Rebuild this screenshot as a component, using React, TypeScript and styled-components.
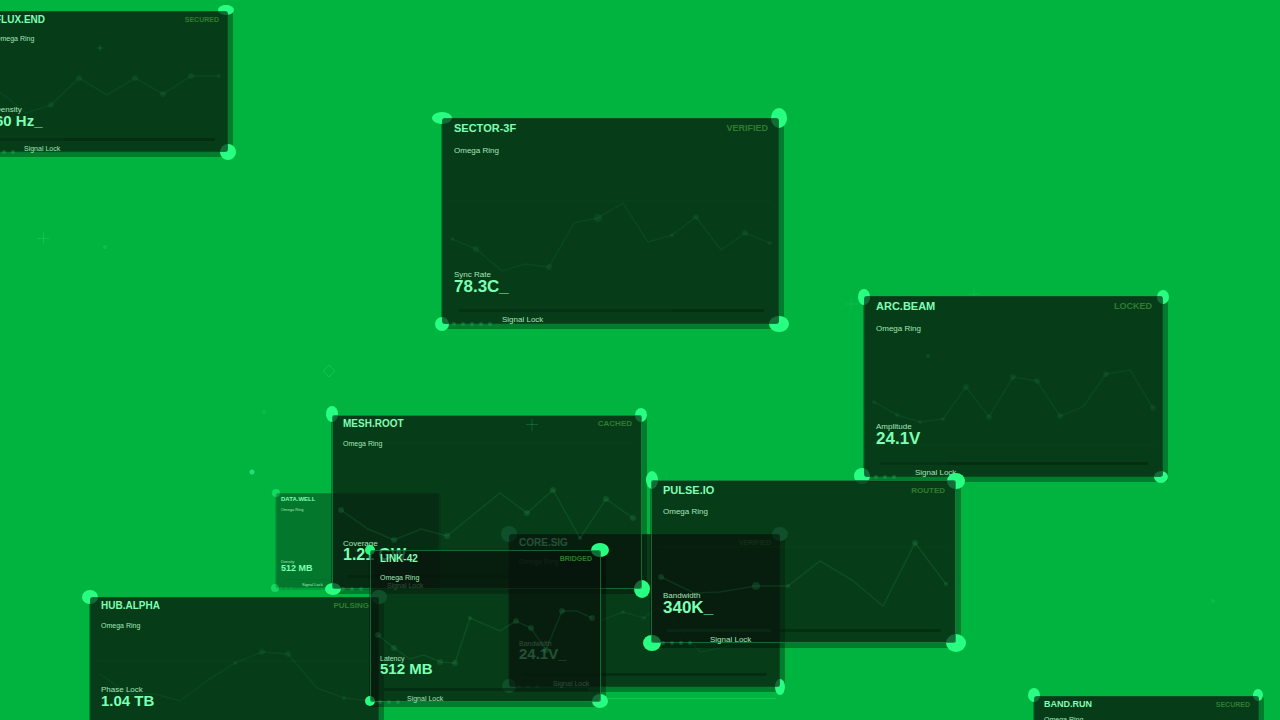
import React from "react";
import styled, { createGlobalStyle, css } from "styled-components";

const GlobalStyle = createGlobalStyle`
  *, *::before, *::after { box-sizing: border-box; }
  body {
    margin: 0;
    background: #00b440;
    font-family: "Liberation Sans", Arial, sans-serif;
  }
  h2, p { margin: 0; }
`;

type Metrics = {
  head: number;
  title: number;
  tag: number;
  subGap: number;
  subLine: number;
  sub: number;
  label: number;
  labelLine: number;
  value: number;
  valueLine: number;
  valueGap: number;
  foot: number;
  footLine: number;
  bar: number;
  barGap: number;
  pad: number;
};

const large: Metrics = {
  head: 20, title: 11, tag: 9, subGap: 7, subLine: 12, sub: 8,
  label: 8, labelLine: 9, value: 17, valueLine: 16, valueGap: 14,
  foot: 8, footLine: 8, bar: 3, barGap: 4, pad: 12,
};
const medium: Metrics = {
  ...large, tag: 8, subGap: 6, valueGap: 13, footLine: 7,
};
const small: Metrics = {
  head: 17, title: 10, tag: 8, subGap: 6, subLine: 12, sub: 7,
  label: 8, labelLine: 8, value: 15, valueLine: 14, valueGap: 14,
  foot: 7, footLine: 7, bar: 3, barGap: 4, pad: 11,
};
const compact: Metrics = {
  ...small, tag: 7, subGap: 5, label: 7, labelLine: 7, valueGap: 12, pad: 10,
};
const tiny: Metrics = {
  head: 12, title: 6, tag: 4, subGap: 1, subLine: 8, sub: 4,
  label: 4, labelLine: 5, value: 9, valueLine: 8, valueGap: 7,
  foot: 4, footLine: 6, bar: 1, barGap: 2, pad: 5,
};

type Corner = [cx: number, cy: number, rx: number, ry: number];
type Point = [x: number, y: number, r?: number];

type Node = {
  title: string;
  tag?: string;
  label: string;
  value: string;
  x: number;
  y: number;
  w: number;
  h: number;
  m: Metrics;
  footX: number;
  dots: number;
  glow?: boolean;
  faint?: boolean;
  fill?: number;
  corners: Corner[];
  series: Point[];
  gridY?: number;
};

const nodes: Node[] = [
  {
    title: "CORE.SIG", tag: "VERIFIED", label: "Bandwidth", value: "24.1V_",
    x: 509, y: 534, w: 271, h: 153, m: compact, footX: 44, dots: 3,
    corners: [[509, 534, 8, 8], [780, 534, 8, 7], [509, 686, 7, 7], [780, 687, 5, 8]],
    series: [[600, 621], [623, 612, 2], [644, 618, 2], [660, 606], [700, 652], [730, 646]],
  },
  {
    title: "DATA.WELL", label: "Density", value: "512 MB",
    x: 276, y: 493, w: 163, h: 95, m: tiny, footX: 26, dots: 3, faint: true,
    corners: [[276, 493, 4, 4], [275, 588, 4, 4]],
    series: [],
  },
  {
    title: "FLUX.END", tag: "SECURED", label: "Density", value: "60 Hz_",
    x: -15, y: 11, w: 243, h: 141, m: { ...compact, label: 8, labelLine: 8, valueGap: 10 }, footX: 39, dots: 3, fill: 30,
    corners: [[226, 10, 8, 5], [228, 152, 8, 8]],
    series: [[-5, 87], [0, 92], [26, 113], [51, 105, 3], [79, 78, 3], [107, 95], [135, 78, 3], [163, 94, 3], [191, 76, 3], [219, 76, 2]],
  },
  {
    title: "SECTOR-3F", tag: "VERIFIED", label: "Sync Rate", value: "78.3C_",
    x: 442, y: 118, w: 337, h: 206, m: large, footX: 60, dots: 5, fill: 70,
    corners: [[442, 118, 10, 6], [779, 118, 8, 10], [442, 324, 7, 7], [779, 324, 10, 8]],
    series: [[452, 239, 2], [476, 249, 3], [502, 271], [525, 264], [549, 267, 3], [574, 223], [598, 218, 4], [623, 203], [648, 242], [672, 235, 2], [696, 217, 3], [721, 250], [745, 233, 3], [770, 243, 2]],
    gridY: 201,
  },
  {
    title: "ARC.BEAM", tag: "LOCKED", label: "Amplitude", value: "24.1V",
    x: 864, y: 296, w: 299, h: 181, m: { ...large, valueGap: 15 }, footX: 51, dots: 3, fill: 25,
    corners: [[864, 297, 6, 8], [1163, 297, 6, 7], [862, 476, 8, 8], [1161, 477, 7, 6]],
    series: [[874, 402, 2], [897, 415, 2], [920, 422, 2], [943, 419, 2], [966, 387, 3], [989, 417, 3], [1013, 377, 3], [1037, 381, 3], [1060, 416, 3], [1083, 407], [1106, 374, 3], [1130, 370], [1153, 408, 3]],
    gridY: 445,
  },
  {
    title: "MESH.ROOT", tag: "CACHED", label: "Coverage", value: "1.21 GW",
    x: 332, y: 415, w: 310, h: 174, m: { ...small, value: 16, valueGap: 13 }, footX: 55, dots: 3, glow: true,
    corners: [[332, 414, 6, 8], [641, 415, 6, 7], [333, 589, 8, 6], [642, 589, 8, 9]],
    series: [[341, 510, 3], [368, 529], [394, 540, 3], [421, 529], [447, 536, 3], [500, 493], [527, 513, 3], [553, 490, 3], [580, 538, 2], [606, 499, 3], [633, 518, 3]],
    gridY: 443,
  },
  {
    title: "HUB.ALPHA", tag: "PULSING", label: "Phase Lock", value: "1.04 TB",
    x: 90, y: 597, w: 289, h: 139, m: small, footX: 55, dots: 4,
    corners: [[90, 597, 8, 7], [379, 597, 8, 7]],
    series: [[100, 674], [128, 694], [155, 694], [180, 701], [208, 680], [235, 663, 2], [262, 652, 3], [288, 654, 3], [317, 688], [344, 698, 2], [372, 701]],
    gridY: 661,
  },
  {
    title: "PULSE.IO", tag: "ROUTED", label: "Bandwidth", value: "340K_",
    x: 651, y: 480, w: 305, h: 163, m: medium, footX: 59, dots: 4, glow: true, fill: 38,
    corners: [[652, 480, 6, 9], [956, 481, 9, 8], [652, 643, 9, 8], [956, 643, 10, 9]],
    series: [[661, 577, 3], [694, 593], [720, 592], [756, 586, 4], [788, 586, 2], [820, 561], [852, 580], [883, 606], [915, 543, 3], [946, 584, 2]],
    gridY: 547,
  },
  {
    title: "LINK-42", tag: "BRIDGED", label: "Latency", value: "512 MB",
    x: 370, y: 550, w: 231, h: 152, m: compact, footX: 37, dots: 3, glow: true,
    corners: [[370, 550, 5, 5], [600, 550, 9, 7], [370, 701, 5, 5], [600, 701, 8, 7]],
    series: [[378, 635, 3], [394, 648, 3], [410, 659], [424, 655], [440, 662, 3], [455, 663, 3], [470, 618, 2], [500, 631], [516, 621, 3], [531, 628, 3], [546, 650, 3], [562, 611, 3], [577, 611], [592, 618, 3]],
  },
  {
    title: "BAND.RUN", tag: "SECURED", label: "Latency", value: "88.2%",
    x: 1034, y: 696, w: 225, h: 140, m: { ...compact, head: 16, title: 9, subGap: 2 }, footX: 38, dots: 3,
    corners: [[1034, 695, 6, 7], [1258, 695, 5, 6]],
    series: [],
  },
];

const Canvas = styled.main`
  position: relative;
  height: 100vh;
  overflow: hidden;
  background: #00b440;
`;

const Backdrop = styled.svg`
  position: absolute;
  top: 0;
  left: 0;
  overflow: visible;
  pointer-events: none;
`;

const Card = styled.article<{ $n: Node }>`
  position: absolute;
  left: ${({ $n }) => $n.x}px;
  top: ${({ $n }) => $n.y}px;
  width: ${({ $n }) => $n.w}px;
  height: ${({ $n }) => $n.h}px;

  &::before {
    content: "";
    position: absolute;
    inset: 0 ${({ $n }) => ($n.faint ? "-2px -2px" : "-5px -5px")} -1px;
    border-radius: 3px;
    background: rgba(0, 0, 0, ${({ $n }) => ($n.faint ? 0.12 : 0.3)});
  }
`;

const Panel = styled.div<{ $m: Metrics; $glow?: boolean; $faint?: boolean }>`
  position: relative;
  display: flex;
  flex-direction: column;
  height: 100%;
  padding: 0 ${({ $m }) => $m.pad - 1}px 0 ${({ $m }) => $m.pad}px;
  border-radius: 3px;
  background: rgba(9, 23, 14, ${({ $faint }) => ($faint ? 0.28 : 0.64)});
  ${({ $glow }) =>
    $glow
      ? css`box-shadow: inset 0 0 0 1px rgba(40, 230, 110, 0.38);`
      : css`box-shadow: inset 0 0 0 1px rgba(40, 230, 110, 0.1);`}
`;

const Header = styled.header<{ $m: Metrics }>`
  display: flex;
  align-items: center;
  justify-content: space-between;
  height: ${({ $m }) => $m.head}px;
`;

const Title = styled.h2<{ $m: Metrics }>`
  font-size: ${({ $m }) => $m.title}px;
  line-height: ${({ $m }) => $m.head}px;
  font-weight: 700;
  color: #7dffb4;
`;

const Tag = styled.span<{ $m: Metrics }>`
  font-size: ${({ $m }) => $m.tag}px;
  font-weight: 700;
  color: #2f7d30;
`;

const Subtitle = styled.p<{ $m: Metrics }>`
  margin-top: ${({ $m }) => $m.subGap}px;
  font-size: ${({ $m }) => $m.sub}px;
  line-height: ${({ $m }) => $m.subLine}px;
  color: #a3e6b9;
`;

const Label = styled.p<{ $m: Metrics }>`
  margin-top: auto;
  font-size: ${({ $m }) => $m.label}px;
  line-height: ${({ $m }) => $m.labelLine}px;
  color: #a3e6b9;
`;

const Value = styled.p<{ $m: Metrics }>`
  margin-bottom: ${({ $m }) => $m.valueGap}px;
  font-size: ${({ $m }) => $m.value}px;
  line-height: ${({ $m }) => $m.valueLine}px;
  font-weight: 700;
  white-space: nowrap;
  color: #7dffb4;
`;

const Bar = styled.div<{ $m: Metrics; $fill: number; $faint?: boolean }>`
  height: ${({ $m }) => $m.bar}px;
  margin: 0 4px ${({ $m }) => $m.barGap}px;
  border-radius: 1px;
  opacity: ${({ $faint }) => ($faint ? 0.15 : 1)};
  background: linear-gradient(
    to right,
    rgba(6, 46, 20, 0.7) ${({ $fill }) => $fill}%,
    rgba(2, 30, 12, 0.5) ${({ $fill }) => $fill}%
  );
`;

const Footer = styled.footer<{ $m: Metrics; $left: number }>`
  padding-left: ${({ $m, $left }) => $left - $m.pad}px;
  font-size: ${({ $m }) => $m.foot}px;
  line-height: ${({ $m }) => $m.footLine}px;
  color: #a3e6b9;
`;

function Corners({ n }: { n: Node }) {
  return (
    <Backdrop width={n.w} height={n.h} viewBox={`${n.x} ${n.y} ${n.w} ${n.h}`} aria-hidden="true">
      {n.corners.map(([cx, cy, rx, ry], i) => (
        <ellipse key={i} cx={cx} cy={cy} rx={rx} ry={ry} fill="#28ff82" opacity={n.faint ? 0.5 : 1} />
      ))}
    </Backdrop>
  );
}

function Chart({ n }: { n: Node }) {
  const step = n.m === tiny ? 5 : 9;
  return (
    <Backdrop width={n.w} height={n.h} viewBox={`${n.x} ${n.y} ${n.w} ${n.h}`} aria-hidden="true">
      {n.gridY && (
        <line x1={n.x + 8} x2={n.x + n.w - 8} y1={n.gridY} y2={n.gridY} stroke="#1fae5c" strokeOpacity="0.06" />
      )}
      <polyline
        points={n.series.map(([px, py]) => `${px},${py}`).join(" ")}
        fill="none"
        stroke="#2fa860"
        strokeWidth="1.5"
        strokeOpacity={n.glow ? 0.16 : 0.11}
      />
      {n.series
        .filter(([, , r]) => r)
        .map(([px, py, r]) => (
          <circle key={px} cx={px} cy={py} r={r} fill="#2fa860" fillOpacity={n.glow ? 0.2 : 0.12} />
        ))}
      {Array.from({ length: n.dots }, (_, i) => (
        <circle
          key={i}
          cx={n.x + n.m.pad + i * step}
          cy={n.y + n.h}
          r={n.m === tiny ? 1 : 2}
          fill="#46b56c"
          fillOpacity="0.3"
        />
      ))}
    </Backdrop>
  );
}

function NodeCard({ n }: { n: Node }) {
  return (
    <Card $n={n}>
      <Corners n={n} />
      <Panel $m={n.m} $glow={n.glow} $faint={n.faint}>
        <Chart n={n} />
        <Header $m={n.m}>
          <Title $m={n.m}>{n.title}</Title>
          {n.tag && <Tag $m={n.m}>{n.tag}</Tag>}
        </Header>
        <Subtitle $m={n.m}>Omega Ring</Subtitle>
        <Label $m={n.m}>{n.label}</Label>
        <Value $m={n.m}>{n.value}</Value>
        <Bar $m={n.m} $fill={n.fill ?? 0} $faint={n.faint} />
        <Footer $m={n.m} $left={n.footX}>Signal Lock</Footer>
      </Panel>
    </Card>
  );
}

function Particles() {
  return (
    <Backdrop width="1280" height="720" viewBox="0 0 1280 720" aria-hidden="true">
      <g stroke="#2fe07a" fill="none">
        <path d="M37 238.500h12M43.500 232v12" strokeOpacity="0.3" />
        <path d="M97 48h6M100 45v6" strokeOpacity="0.2" />
        <path d="M526 424.500h12M532 419v12" strokeOpacity="0.22" />
        <path d="M845 304h12M851 298v12" strokeOpacity="0.2" />
        <path d="M968 294h12M974 288v8" strokeOpacity="0.2" />
        <path d="M329 365l6 6-6 6-6-6z" strokeOpacity="0.35" />
        <path d="M605 698.500h171" strokeOpacity="0.4" />
      </g>
      <g fill="#2fe07a">
        <circle cx="252" cy="472" r="2.500" fillOpacity="0.9" />
        <circle cx="105" cy="247" r="2" fillOpacity="0.25" />
        <circle cx="264" cy="412" r="2" fillOpacity="0.2" />
        <circle cx="928" cy="356" r="2" fillOpacity="0.1" />
        <circle cx="1213" cy="601" r="2" fillOpacity="0.2" />
      </g>
    </Backdrop>
  );
}

export default function App() {
  return (
    <>
      <GlobalStyle />
      <Canvas>
        {nodes.map((n) => (
          <NodeCard key={n.title} n={n} />
        ))}
        <Particles />
      </Canvas>
    </>
  );
}
